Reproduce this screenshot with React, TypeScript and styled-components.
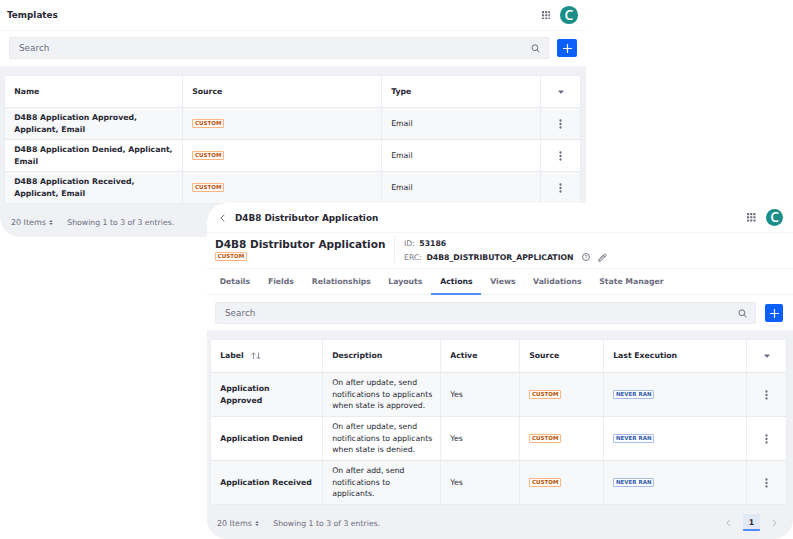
import React from "react";
import styled, { createGlobalStyle } from "styled-components";

const Global = createGlobalStyle`
  * { box-sizing: border-box; }
  html, body { margin: 0; background: #fff; }
  body { font-family: "DejaVu Sans", sans-serif; font-size: 7.74px; color: #272833; }
  button { font: inherit; color: inherit; border: 0; padding: 0; background: none; }
`;

const Canvas = styled.main`
  position: relative;
  width: 793px;
  height: 539px;
  overflow: hidden;
`;

const Window = styled.section<{ $x: number; $y: number; $h: number; $radius: string }>`
  position: absolute;
  left: ${(p) => p.$x}px;
  top: ${(p) => p.$y}px;
  width: 586px;
  height: ${(p) => p.$h}px;
  border-radius: ${(p) => p.$radius};
  background: #f0f1f5;
  overflow: hidden;
`;

const Header = styled.header<{ $h: number; $right: number }>`
  height: ${(p) => p.$h}px;
  display: flex;
  align-items: center;
  padding: 0 ${(p) => p.$right}px 0 7px;
  background: #fff;
  border-bottom: 1px solid #f5f5f8;
`;

const Title = styled.h1`
  margin: 0;
  flex: 1;
  font-size: 8.84px;
  line-height: 14px;
  font-weight: 700;
  white-space: nowrap;
`;

const BackButton = styled.button`
  width: 21px;
  height: 14px;
  display: flex;
  align-items: center;
  padding-left: 5.5px;
`;

const AppsButton = styled.button`
  display: flex;
  margin-right: 10px;
`;

const Avatar = styled.div`
  width: 17.5px;
  height: 17.5px;
  border-radius: 50%;
  background: #1c8e8a;
  color: #fff;
  display: flex;
  align-items: center;
  justify-content: center;
  padding-bottom: 2px;
  font: 600 14px/15px "Open Sans", sans-serif;
`;

const Info = styled.div`
  height: 36px;
  display: flex;
  padding: 4px 0 0 8px;
  background: #fff;
  border-bottom: 1px solid #f3f3f7;
`;

const Identity = styled.div`
  width: 180px;
  height: 26px;
  padding-top: 1px;
  border-right: 1px solid #f0f0f4;
`;

const ObjectName = styled.h2`
  margin: 0;
  font-size: 10.5px;
  line-height: 13px;
  padding-bottom: 1px;
  white-space: nowrap;
`;

const Meta = styled.div`
  padding-left: 9px;
`;

const MetaLine = styled.div`
  height: 13.5px;
  display: flex;
  align-items: center;
  color: #777889;
  white-space: nowrap;
  b { color: #272833; margin-left: 4.5px; }
  svg { margin-left: 8.3px; }
`;

const Tabs = styled.nav`
  height: 26px;
  display: flex;
  padding-left: 4.4px;
  background: #fff;
  box-shadow: inset 0 -1px #f3f3f7;
`;

const Tab = styled.button<{ $w: number; $active?: boolean }>`
  width: ${(p) => p.$w}px;
  height: 26px;
  font-weight: 700;
  padding-top: 1px;
  line-height: 23px;
  text-align: center;
  white-space: nowrap;
  color: ${(p) => (p.$active ? "#272833" : "#6b6c7e")};
  border-bottom: 2px solid ${(p) => (p.$active ? "#528bff" : "transparent")};
`;

const Toolbar = styled.div<{ $left: number; $top: number; $field: number; $gap: number }>`
  height: 35px;
  display: grid;
  grid-template-columns: ${(p) => p.$field}px 20px;
  column-gap: ${(p) => p.$gap}px;
  align-items: center;
  align-content: start;
  padding: ${(p) => p.$top}px 0 0 ${(p) => p.$left}px;
  background: #fff;
`;

const Search = styled.label`
  height: 22px;
  display: flex;
  align-items: center;
  justify-content: space-between;
  padding: 0 8.5px 0 9px;
  font-size: 8.84px;
  color: #6b6c7e;
  background: #f1f2f5;
  border: 1px solid #eaeaef;
  border-radius: 2px;
`;

const AddButton = styled.button<{ $w: number }>`
  width: ${(p) => p.$w}px;
  height: 18px;
  border-radius: 2px;
  background: #0b5fff;
  display: flex;
  align-items: center;
  justify-content: center;
`;

const Table = styled.div<{ $left: number }>`
  width: 575px;
  margin: 10px 0 0 ${(p) => p.$left}px;
  background: #fff;
  box-shadow: 0 0 0 1px #ebecf0;
  border-radius: 2px;
`;

const Row = styled.div<{ $cols: string; $h: number; $shade?: boolean }>`
  display: grid;
  grid-template-columns: ${(p) => p.$cols};
  height: ${(p) => p.$h}px;
  background: ${(p) => (p.$shade ? "#f7f8f9" : "#fff")};
  & + & { border-top: 1px solid #e9eaee; }
`;

const Cell = styled.div<{ $bold?: boolean; $center?: boolean }>`
  display: flex;
  align-items: center;
  justify-content: ${(p) => (p.$center ? "center" : "flex-start")};
  padding-left: ${(p) => (p.$center ? 0 : 9.2)}px;
  line-height: 11.6px;
  font-weight: ${(p) => (p.$bold ? 700 : 400)};
  white-space: pre;
  & + & { border-left: 1px solid #ecedf0; }
`;

const Badge = styled.span<{ $blue?: boolean }>`
  display: flex;
  align-items: center;
  justify-content: center;
  width: ${(p) => (p.$blue ? 41 : 32)}px;
  height: 9px;
  font-size: 5.5px;
  line-height: 7px;
  font-weight: 700;
  color: ${(p) => (p.$blue ? "#2e5aac" : "#b95000")};
  background: #fff;
  border: 1px solid ${(p) => (p.$blue ? "#a4bce9" : "#ffb482")};
  border-radius: 1px;
  white-space: nowrap;
`;

const Footer = styled.footer<{ $left: number }>`
  height: 36px;
  display: flex;
  align-items: center;
  padding: 1px 16px 0 ${(p) => p.$left}px;
  color: #6b6c7e;
  white-space: nowrap;
`;

const PageSize = styled.div`
  width: 56.3px;
  display: flex;
  align-items: center;
  gap: 3px;
  font-size: 7.95px;
  padding-top: 2px;
`;

const Summary = styled.span`
  padding-top: 2px;
`;

const Pager = styled.div`
  margin-left: auto;
  display: flex;
  align-items: center;
  gap: 12px;
`;

const Page = styled.button`
  width: 17px;
  height: 17px;
  padding-top: 1px;
  font-weight: 700;
  color: #272833;
  background: #e2e8f6;
  border-bottom: 2px solid #528bff;
  border-radius: 1px;
`;

const SortMark = styled.span`
  display: flex;
  margin-left: 7px;
`;

const Chevron = ({ right, color = "#6b6c7e" }: { right?: boolean; color?: string }) => (
  <svg width="5" height="8" viewBox="0 0 5 8" fill="none" stroke={color} strokeWidth="1">
    <path d={right ? "M.7.7 4.2 4 .7 7.3" : "M4.3.7.8 4l3.5 3.3"} />
  </svg>
);

const Apps = () => (
  <svg width="8.5" height="8.5" viewBox="0 0 8 8" fill="#6b6c7e">
    {[0, 3, 6].map((y) => [0, 3, 6].map((x) => <rect key={`${x}${y}`} x={x} y={y} width="2" height="2" rx=".3" />))}
  </svg>
);

const Magnifier = () => (
  <svg width="9" height="9" viewBox="0 0 9 9" fill="none" stroke="#6b6c7e" strokeWidth="1">
    <circle cx="3.9" cy="3.7" r="2.9" />
    <path d="m6 5.8 2.5 2.6" />
  </svg>
);

const Plus = () => (
  <svg width="9" height="9" viewBox="0 0 9 9" stroke="#fff" strokeWidth="1.2">
    <path d="M4.5 0v9M0 4.5h9" />
  </svg>
);

const Caret = () => (
  <svg width="6" height="4" viewBox="0 0 6 4" fill="#6b6c7e">
    <path d="M.5.4h5q.5.2.1.7L3.4 3.5H2.6L.4 1.1Q0 .6.5.4Z" />
  </svg>
);

const Dots = () => (
  <svg width="3" height="10" viewBox="0 0 3 10" fill="#6b6c7e">
    <circle cx="1.5" cy="1.5" r="1.15" />
    <circle cx="1.5" cy="5" r="1.15" />
    <circle cx="1.5" cy="8.5" r="1.15" />
  </svg>
);

const Updown = () => (
  <svg width="4" height="5" viewBox="0 0 4 5" fill="#6b6c7e">
    <path d="M2 0 3.8 2H.2ZM2 5 .2 3h3.6Z" />
  </svg>
);

const Sort = () => (
  <svg width="10" height="8" viewBox="0 0 10 8" fill="none" stroke="#777889" strokeWidth=".8">
    <path d="M2.5 7.2V.8M.5 2.8l2-2 2 2M7.5.5v6.4M5.5 4.9l2 2 2-2" />
  </svg>
);

const Help = () => (
  <svg width="8" height="8" viewBox="0 0 8 8" fill="none" stroke="#6b6c7e" strokeWidth=".9">
    <circle cx="4" cy="4" r="3.5" />
    <path d="M3 3.1c.1-1.3 2-1.2 2 0C5 3.8 4 3.8 4 4.7M4 5.4v.7" strokeWidth=".7" />
  </svg>
);

const Pencil = () => (
  <svg width="9" height="9" viewBox="0 0 9 9" fill="none" stroke="#6b6c7e" strokeWidth=".9">
    <path d="m.7 8.3.5-2.1 5-5q.6-.6 1.2 0l.5.5q.5.5 0 1.1l-5 5ZM5.3 2.1l1.7 1.7M1.7 6.8l4-4" />
  </svg>
);

const Account = () => (
  <>
    <AppsButton aria-label="Applications"><Apps /></AppsButton>
    <Avatar>C</Avatar>
  </>
);

const SearchBar = (p: { left: number; top: number; field: number; gap: number; button: number }) => (
  <Toolbar $left={p.left} $top={p.top} $field={p.field} $gap={p.gap}>
    <Search><span>Search</span><Magnifier /></Search>
    <AddButton $w={p.button} aria-label="Add"><Plus /></AddButton>
  </Toolbar>
);

const Entries = () => (
  <>
    <PageSize>20 Items <Updown /></PageSize>
    <Summary>Showing 1 to 3 of 3 entries.</Summary>
  </>
);

const templateCols = "177px 199px 159px 40px";
const templates = [
  "D4B8 Application Approved,\nApplicant, Email",
  "D4B8 Application Denied, Applicant,\nEmail",
  "D4B8 Application Received,\nApplicant, Email",
];

const actionCols = "111px 118px 79px 84px 143px 40px";
const actions = [
  ["Application\nApproved", "On after update, send\nnotifications to applicants\nwhen state is approved."],
  ["Application Denied", "On after update, send\nnotifications to applicants\nwhen state is denied."],
  ["Application Received", "On after add, send\nnotifications to\napplicants."],
];

const tabs: [string, number][] = [
  ["Details", 47], ["Fields", 45], ["Relationships", 76], ["Layouts", 52], ["Actions", 50],
  ["Views", 43], ["Validations", 66], ["State Manager", 82],
];

export default function App() {
  return (
    <>
      <Global />
      <Canvas>
        <Window $x={0} $y={0} $h={237} $radius="0 0 0 20px">
          <Header $h={31} $right={8.3}><Title>Templates</Title><Account /></Header>
          <SearchBar left={9} top={6} field={540} gap={8} button={20} />
          <Table $left={5}>
            <Row $cols={templateCols} $h={31}>
              <Cell $bold>Name</Cell><Cell $bold>Source</Cell><Cell $bold>Type</Cell><Cell $center><Caret /></Cell>
            </Row>
            {templates.map((name, i) => (
              <Row key={name} $cols={templateCols} $h={32} $shade={i % 2 === 0}>
                <Cell $bold>{name}</Cell><Cell><Badge>CUSTOM</Badge></Cell><Cell>Email</Cell><Cell $center><Dots /></Cell>
              </Row>
            ))}
          </Table>
          <Footer $left={11}><Entries /></Footer>
        </Window>
        <Window $x={207} $y={203} $h={336} $radius="20px">
          <Header $h={30} $right={9.7}>
            <BackButton aria-label="Back"><Chevron /></BackButton>
            <Title>D4B8 Distributor Application</Title><Account />
          </Header>
          <Info>
            <Identity>
              <ObjectName>D4B8 Distributor Application</ObjectName>
              <Badge>CUSTOM</Badge>
            </Identity>
            <Meta>
              <MetaLine>ID:<b>53186</b></MetaLine>
              <MetaLine>ERC:<b>D4B8_DISTRIBUTOR_APPLICATION</b><Help /><Pencil /></MetaLine>
            </Meta>
          </Info>
          <Tabs>{tabs.map(([name, w]) => <Tab key={name} $w={w} $active={name === "Actions"}>{name}</Tab>)}</Tabs>
          <SearchBar left={8} top={7} field={541} gap={9} button={18} />
          <Table $left={4}>
            <Row $cols={actionCols} $h={32}>
              <Cell $bold>Label<SortMark><Sort /></SortMark></Cell><Cell $bold>Description</Cell><Cell $bold>Active</Cell>
              <Cell $bold>Source</Cell><Cell $bold>Last Execution</Cell><Cell $center><Caret /></Cell>
            </Row>
            {actions.map(([label, text], i) => (
              <Row key={label} $cols={actionCols} $h={44} $shade={i % 2 === 0}>
                <Cell $bold>{label}</Cell><Cell>{text}</Cell><Cell>Yes</Cell><Cell><Badge>CUSTOM</Badge></Cell>
                <Cell><Badge $blue>NEVER RAN</Badge></Cell><Cell $center><Dots /></Cell>
              </Row>
            ))}
          </Table>
          <Footer $left={10}>
            <Entries />
            <Pager><Chevron color="#b5b6c2" /><Page>1</Page><Chevron right color="#b5b6c2" /></Pager>
          </Footer>
        </Window>
      </Canvas>
    </>
  );
}
